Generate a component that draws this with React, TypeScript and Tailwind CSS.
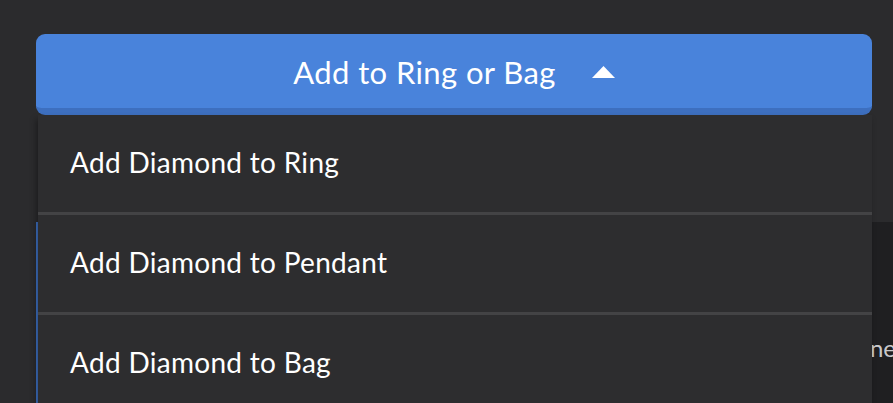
import React from 'react';

const items = ['Add Diamond to Ring', 'Add Diamond to Pendant', 'Add Diamond to Bag'];

export default function App() {
  return (
    <div
      className="h-[403px] w-[893px] overflow-hidden bg-[#2b2b2d] pt-[34px] pl-[36px] pr-[21px]"
      style={{ fontFamily: 'Lato, "Noto Sans", sans-serif' }}
    >
      <button className="flex h-[81px] w-full items-center justify-center gap-[36px] rounded-[9px] border-b-[7px] border-[#3d6fbf] bg-[#4983db] text-white">
        <span className="mt-[2px] text-[31px] leading-none tracking-[0.4px]">Add to Ring or Bag</span>
        <svg width="23" height="12" viewBox="0 0 23 12" className="mt-[1px]">
          <polygon points="11.5,0 23,12 0,12" fill="#ffffff" />
        </svg>
      </button>

      <div className="relative pt-[107px]">
        {/* content behind the open menu */}
        <div className="mr-[-21px] flex h-[200px] justify-end border-l-2 border-[#3f72c4] bg-[#1f1f21] pt-[114px]">
          <span className="mr-[-3px] text-[24px] leading-none text-[#c9c9cb]">Phone</span>
        </div>

        <div className="absolute top-0 left-[2px] right-0 flex flex-col bg-[#2d2d2f] shadow-[-2px_4px_6px_rgba(0,0,0,0.35)]">
          {items.map((label, i) => (
            <div
              key={label}
              className={`flex items-center pl-[32px] text-[28px] leading-none tracking-[0.3px] text-white ${
                i > 0 ? 'h-[100px] border-t-[3px] border-[#434345]' : 'h-[97px]'
              }`}
            >
              <span className="mt-[-4px]">{label}</span>
            </div>
          ))}
        </div>
      </div>
    </div>
  );
}
